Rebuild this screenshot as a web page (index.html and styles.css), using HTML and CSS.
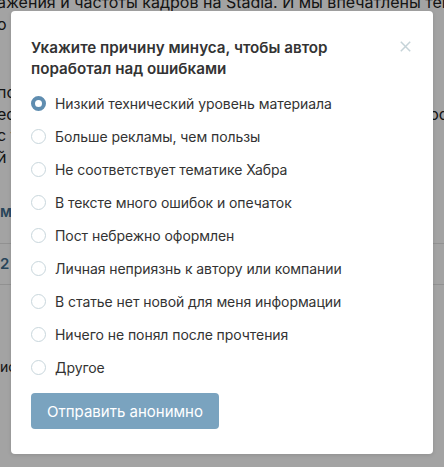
FILE: index.html
```html
<!DOCTYPE html>
<html lang="ru">
<head>
<meta charset="utf-8">
<title>Причина минуса</title>
<link rel="stylesheet" href="styles.css">
</head>
<body>
<div class="page">
  <div class="article">
    <p class="para para-top">
      <span class="line">ажения и частоты кадров на Stadia. И мы впечатлены тем, как</span>
      <span class="line">о сервис работает уже сейчас</span>
    </p>
    <p class="para">
      <span class="line">по сравнению с тем, что мы видели раньше</span>
      <span class="line split"><span>ес</span><span>ос</span></span>
      <span class="line">с тем, что мы видели</span>
      <span class="line">й Stadia</span>
    </p>
    <div class="meta"><span class="link">мс</span></div>
    <div class="row"><span class="link">2</span></div>
    <div class="row row-empty"></div>
    <div class="foot">ис</div>
  </div>
  <div class="overlay"></div>

  <div class="modal" role="dialog">
    <div class="modal-head">
      <h2 class="modal-title">Укажите причину минуса, чтобы автор поработал над ошибками</h2>
      <button class="close" aria-label="Закрыть">
        <svg width="11" height="11" viewBox="0 0 11 11"><path d="M0.8 0.8L10.2 10.2M10.2 0.8L0.8 10.2" stroke="currentColor" stroke-width="1.5" fill="none"/></svg>
      </button>
    </div>
    <ul class="options">
      <li class="option"><span class="radio radio-on"></span><span>Низкий технический уровень материала</span></li>
      <li class="option"><span class="radio"></span><span>Больше рекламы, чем пользы</span></li>
      <li class="option"><span class="radio"></span><span>Не соответствует тематике Хабра</span></li>
      <li class="option"><span class="radio"></span><span>В тексте много ошибок и опечаток</span></li>
      <li class="option"><span class="radio"></span><span>Пост небрежно оформлен</span></li>
      <li class="option"><span class="radio"></span><span>Личная неприязнь к автору или компании</span></li>
      <li class="option"><span class="radio"></span><span>В статье нет новой для меня информации</span></li>
      <li class="option"><span class="radio"></span><span>Ничего не понял после прочтения</span></li>
      <li class="option"><span class="radio"></span><span>Другое</span></li>
    </ul>
    <button class="submit">Отправить анонимно</button>
  </div>
</div>
</body>
</html>
```
FILE: styles.css
```css
* { box-sizing: border-box; }
html, body { margin: 0; padding: 0; }
body {
  font-family: Inter, "Liberation Sans", Arial, sans-serif;
  background: #fff;
}
.page {
  position: relative;
  width: 444px;
  height: 467px;
  overflow: hidden;
  background: #fff;
}
.article {
  margin-top: -8px;
  margin-left: -3px;
  font-size: 16px;
  line-height: 21.5px;
  color: #222;
}
.para { margin: 0; }
.para-top { margin-bottom: 47px; }
.line {
  display: block;
  height: 21.5px;
  white-space: nowrap;
}
.split {
  display: flex;
  justify-content: space-between;
  width: 451px;
}
.meta {
  margin-top: 33px;
  height: 42px;
  padding-left: 3px;
}
.link { color: #3e6d8e; font-weight: 600; font-size: 15px; }
.row {
  border-top: 1px solid #e3e3e3;
  height: 41px;
  display: flex;
  align-items: center;
  padding-left: 3px;
}
.row-empty { height: 72px; }
.foot {
  font-size: 14px;
  padding-left: 3px;
  color: #222;
}
.overlay {
  position: absolute;
  inset: 0;
  background: rgba(0, 0, 0, 0.36);
}
.modal {
  position: absolute;
  left: 11px;
  top: 11px;
  width: 422px;
  height: 443px;
  background: #fff;
  border-radius: 4px;
  padding: 26px 22px 25px 20px;
  box-shadow: 0 1px 4px rgba(0, 0, 0, 0.12);
}
.modal-head {
  display: flex;
  justify-content: space-between;
  align-items: flex-start;
}
.modal-title {
  margin: 0;
  width: 310px;
  font-size: 15.2px;
  line-height: 21px;
  font-weight: 600;
  color: #333;
}
.close {
  border: 0;
  background: none;
  padding: 0;
  margin: 4px 0 0 0;
  width: 11px;
  height: 11px;
  color: #c5d3d8;
  display: block;
}
.close svg { display: block; }
.options {
  list-style: none;
  margin: 8px 0 0 0;
  padding: 0;
}
.option {
  height: 33px;
  display: flex;
  align-items: center;
  gap: 9px;
  font-size: 14px;
  letter-spacing: -0.06px;
  color: #333;
}
.radio {
  width: 15px;
  height: 15px;
  border-radius: 50%;
  border: 1px solid #c8d6dc;
  background: #fff;
  flex: none;
}
.radio-on {
  border: 4px solid #5f8db0;
}
.submit {
  margin-top: 9px;
  height: 36px;
  width: 188px;
  border: 0;
  border-radius: 4px;
  background: #7aa3bf;
  color: #fff;
  font-family: inherit;
  font-size: 15px;
  padding: 0;
  display: flex;
  align-items: center;
  justify-content: center;
}
```
